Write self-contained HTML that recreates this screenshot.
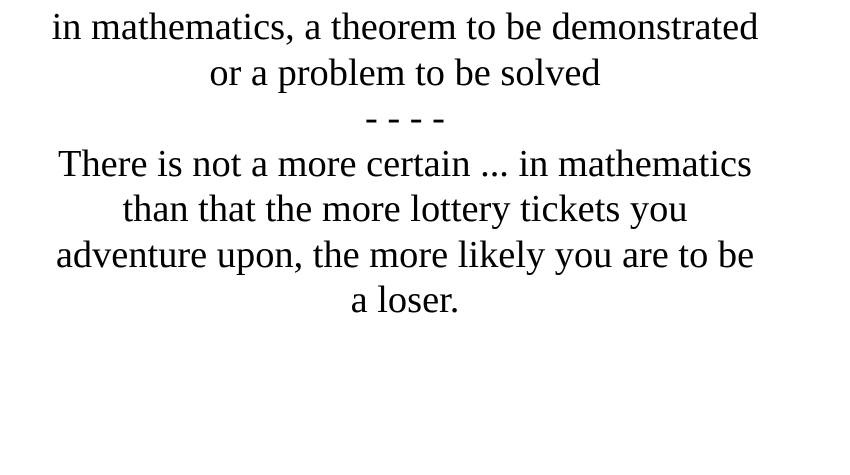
<!DOCTYPE html>
<html><head><meta charset="utf-8"><style>
html,body{margin:0;padding:0;background:#fff;width:850px;height:475px;overflow:hidden}
.t{font-family:"Liberation Serif",serif;font-size:38.4px;line-height:45.5px;color:#000;text-align:center;width:810px;margin:5px 0 0 0}
</style></head><body>
<div class="t">in mathematics, a theorem to be demonstrated<br>or a problem to be solved<br>- - - -<br>There is not a more certain ... in mathematics<br>than that the more lottery tickets you<br>adventure upon, the more likely you are to be<br>a loser.</div>
</body></html>
